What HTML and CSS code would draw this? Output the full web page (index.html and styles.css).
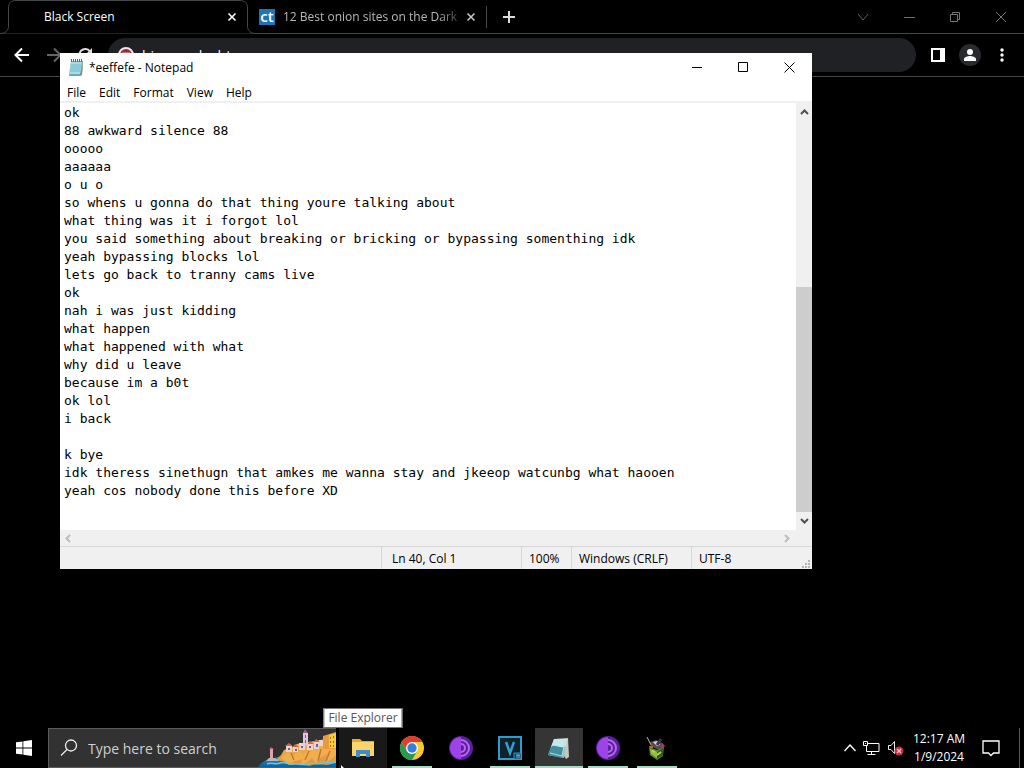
FILE: index.html
```html
<!DOCTYPE html>
<html lang="en">
<head>
    <meta charset="UTF-8">
    <meta name="viewport" content="width=device-width, initial-scale=1.0">
    <title>Black Screen</title>
    <link rel="stylesheet" href="styles.css">
</head>
<body>
    <div class="desktop">
        <!-- Browser -->
        <header class="browser">
            <div class="tab-strip">
                <div class="tab active">
                    <svg class="tab-outline" width="256" height="34" viewBox="0 0 256 34" fill="#000" stroke="#46474a"><path d="M0 33.500C5 33.500 8.500 31 8.500 26V8C8.500 3 11 .5 16 .5H239C245 .5 247.500 3 247.500 8V26C247.500 31 251 33.500 256 33.500"/></svg>
                    <span class="tab-title">Black Screen</span>
                    <button class="tab-close" aria-label="Close tab"><svg width="10" height="10" viewBox="0 0 10 10" stroke="#fff" stroke-width="1.600"><path d="M1.500 1.500l7 7M8.500 1.500l-7 7"/></svg></button>
                </div>
                <div class="tab">
                    <span class="favicon">ct</span>
                    <span class="tab-title faded">12 Best onion sites on the Dark</span>
                    <button class="tab-close" aria-label="Close tab"><svg width="10" height="10" viewBox="0 0 10 10" stroke="#c4c4c4" stroke-width="1.600"><path d="M1.500 1.500l7 7M8.500 1.500l-7 7"/></svg></button>
                </div>
                <button class="new-tab" aria-label="New tab"><svg width="12" height="12" viewBox="0 0 12 12" stroke="#ddd" stroke-width="2"><path d="M6 0v12M0 6h12"/></svg></button>
                <div class="browser-controls">
                    <button aria-label="Search tabs"><svg width="12" height="12" viewBox="0 0 12 12" fill="none" stroke="#606060"><path d="M1 3l5 6 5-6"/></svg></button>
                    <button aria-label="Minimize"><svg width="12" height="12" viewBox="0 0 12 12" stroke="#6d6d6d"><path d="M1 6.500h11"/></svg></button>
                    <button aria-label="Restore"><svg width="12" height="12" viewBox="0 0 12 12" fill="none" stroke="#777"><path d="M1.500 3.500h7v7h-7zM3.500 3V1.500h7v7H9"/></svg></button>
                    <button aria-label="Close"><svg width="12" height="12" viewBox="0 0 12 12" stroke="#777"><path d="M1 1l10 10M11 1L1 11"/></svg></button>
                </div>
            </div>
            <div class="toolbar">
                <button class="nav-btn" aria-label="Back"><svg width="16" height="16" viewBox="0 0 16 16" fill="none" stroke="#fff" stroke-width="2"><path d="M15 8H2M8 1.500L1.500 8 8 14.500"/></svg></button>
                <button class="nav-btn" aria-label="Forward"><svg width="16" height="16" viewBox="0 0 16 16" fill="none" stroke="#666" stroke-width="2"><path d="M1 8h13M8 1.500L14.500 8 8 14.500"/></svg></button>
                <button class="nav-btn" aria-label="Reload"><svg width="16" height="16" viewBox="0 0 16 16" fill="none" stroke="#ddd" stroke-width="2"><path d="M12.500 11A6 6 0 1 1 12 4.300"/><path d="M14 1v6H8z" fill="#ddd" stroke="none"/></svg></button>
                <div class="omnibox">
                    <svg width="16" height="16" viewBox="0 0 16 16"><circle cx="8" cy="8" r="7" fill="#7c3540" stroke="#f4e3e5" stroke-width="2"/><path d="M4 7h8" stroke="#dc6873" stroke-width="4"/></svg>
                    <input type="text" aria-label="Address" value="bigyear.dusht">
                </div>
                <button class="tool-btn" aria-label="Side panel"><svg width="14" height="14" viewBox="0 0 14 14"><path fill="#fff" fill-rule="evenodd" d="M0 0h14v14H0zM2 2v10h7V2z"/></svg></button>
                <button class="tool-btn" aria-label="Profile"><svg width="22" height="22" viewBox="0 0 22 22"><circle cx="11" cy="11" r="11" fill="#292a2d"/><circle cx="11" cy="8" r="3" fill="#fff"/><path d="M5 17v-2c0-2 4-3 6-3s6 1 6 3v2z" fill="#fff"/></svg></button>
                <button class="tool-btn" aria-label="Menu"><svg width="4" height="14" viewBox="0 0 4 14" fill="#fff"><circle cx="2" cy="2" r="1.700"/><circle cx="2" cy="7" r="1.700"/><circle cx="2" cy="12" r="1.700"/></svg></button>
            </div>
        </header>
        <main class="page"></main>

        <!-- Notepad window -->
        <section class="notepad">
            <div class="titlebar">
                <svg width="17" height="18" viewBox="0 0 17 18"><path d="M3 2h12l-1 14-3 1H1z" fill="#67adb9"/><path d="M3 3h11l-2 12H1z" fill="#a5dce5"/><path d="M3 6h10M3 8h10M2 10h10M2 12h10" stroke="#70bac8"/><path d="M15 3l-1 13-3 1 2-3z" fill="#9a8459"/><path d="M3.500 0v3M5.500 0v3M7.500 0v3M9.500 0v3M11.500 0v3M13.500 0v3" stroke="#526970"/></svg>
                <h1>*eeffefe - Notepad</h1>
                <div class="window-controls">
                    <button aria-label="Minimize"><svg width="11" height="11" viewBox="0 0 11 11" stroke="#000"><path d="M0 5.500h10"/></svg></button>
                    <button aria-label="Maximize"><svg width="11" height="11" viewBox="0 0 11 11" fill="none" stroke="#000"><path d="M.5.5h9v9h-9z"/></svg></button>
                    <button aria-label="Close"><svg width="11" height="11" viewBox="0 0 11 11" stroke="#000"><path d="M.5.5l10 10M10.500.5l-10 10"/></svg></button>
                </div>
            </div>
            <nav class="menubar">
                <button>File</button>
                <button>Edit</button>
                <button>Format</button>
                <button>View</button>
                <button>Help</button>
            </nav>
            <div class="editor">
                <textarea aria-label="Text editor" wrap="off" spellcheck="false">ok
88 awkward silence 88
ooooo
aaaaaa
o u o
so whens u gonna do that thing youre talking about
what thing was it i forgot lol
you said something about breaking or bricking or bypassing somenthing idk
yeah bypassing blocks lol
lets go back to tranny cams live
ok
nah i was just kidding
what happen
what happened with what
why did u leave
because im a b0t
ok lol
i back

k bye
idk theress sinethugn that amkes me wanna stay and jkeeop watcunbg what haooen
yeah cos nobody done this before XD</textarea>
                <div class="scroll-y">
                    <button aria-label="Scroll up"><svg width="9" height="6" viewBox="0 0 9 6" fill="none" stroke="#505050" stroke-width="2"><path d="M1 5l3.500-3.500L8 5"/></svg></button>
                    <div class="thumb"></div>
                    <button aria-label="Scroll down"><svg width="9" height="6" viewBox="0 0 9 6" fill="none" stroke="#505050" stroke-width="2"><path d="M1 1l3.500 3.500L8 1"/></svg></button>
                </div>
            </div>
            <div class="scroll-x">
                <button aria-label="Scroll left"><svg width="6" height="9" viewBox="0 0 6 9" fill="none" stroke="#bcbcbc" stroke-width="2"><path d="M5 1L1.500 4.500 5 8"/></svg></button>
                <button aria-label="Scroll right"><svg width="6" height="9" viewBox="0 0 6 9" fill="none" stroke="#bcbcbc" stroke-width="2"><path d="M1 1l3.500 3.500L1 8"/></svg></button>
            </div>
            <footer class="statusbar">
                <span class="position">Ln 40, Col 1</span>
                <span class="zoom">100%</span>
                <span class="line-ending">Windows (CRLF)</span>
                <span class="encoding">UTF-8</span>
                <svg width="9" height="9" viewBox="0 0 9 9" fill="#b4b4b4"><path d="M6 0h2v2H6zM3 3h2v2H3zM6 3h2v2H6zM0 6h2v2H0zM3 6h2v2H3zM6 6h2v2H6z"/></svg>
            </footer>
        </section>

        <!-- Taskbar -->
        <footer class="taskbar">
            <button class="start" aria-label="Start"><svg width="16" height="16" viewBox="0 0 16 16" fill="#fff"><path d="M0 2.300L6.500 1.400v6.100H0zM7.300 1.300L16 0v7.500H7.300zM0 8.400h6.500v6.200L0 13.700zM7.300 8.400H16V16l-8.700-1.300z"/></svg></button>
            <label class="search">
                <svg width="18" height="18" viewBox="0 0 18 18" fill="none" stroke="#eee" stroke-width="1.300"><circle cx="11" cy="6.500" r="5.500"/><path d="M7 10.500L1 16.500"/></svg>
                <input type="text" placeholder="Type here to search" aria-label="Type here to search">
                <svg class="scenery" width="79" height="38" viewBox="0 0 79 38">
                    <defs>
                        <linearGradient id="rock" x1="0" y1="0" x2="0" y2="1"><stop offset="0" stop-color="#f3bd62"/><stop offset="1" stop-color="#dd9238"/></linearGradient>
                        <linearGradient id="sea" x1="0" y1="0" x2="0" y2="1"><stop offset="0" stop-color="#2f9cc4"/><stop offset="1" stop-color="#0c609a"/></linearGradient>
                    </defs>
                    <path d="M1 38c3-4 7-7 13-8l14-4 51 6v6z" fill="url(#sea)"/>
                    <path d="M19 31l5-5 3-5 8-3 5-3 12-2 12-2 15-4v26l-8 3-12-1-7 2-10-2-7 1-6-3z" fill="url(#rock)"/>
                    <path d="M24 29l7-6 5 4 7-5 3 4 8-8 6 4 6-8 13 3v9l-10 8 2-10-7 4-5 7-4-6-6 5-6 2 3-6-8 2-6 4z" fill="#f1ae4c"/>
                    <path d="M34 24l3 7M52 22l-4 9M64 20l-3 12M73 22l-4 10" stroke="#c67830" fill="none" stroke-width="1.500"/>
                    <path d="M29 17h6v6h-6zM36 18h5v5h-5zM42 14h6v7h-6zM50 15h6v6h-6zM57 13h5v7h-5zM62 11h4v6h-4z" fill="#efd3c9"/>
                    <path d="M28 17l4-3 4 3zM36 18l2-3 4 3zM50 15l3-3 4 3zM57 13l2-3 4 3z" fill="#c9645a"/>
                    <path d="M46 4h5v12h-5z" fill="#dfc6df"/>
                    <path d="M46 4l2-4 3 4z" fill="#9d5b94"/>
                    <path d="M48 6h1v3h-1zM48 11h1v3h-1zM31 19h2v2h-2zM38 20h2v2h-2zM44 17h2v2h-2zM52 17h2v2h-2zM59 15h2v3h-2z" fill="#745c98"/>
                    <path d="M66 7l13-4v17H66z" fill="#e79b3d"/><path d="M72 6l7-2v15h-7z" fill="#f7cd3c"/>
                    <path d="M73 8h1v2h-1zM76 7h1v2h-1zM73 12h1v2h-1zM76 12h1v2h-1zM73 16h1v2h-1zM76 16h1v2h-1z" fill="#9b6725"/>
                    <path d="M13 20h3v10h-3z" fill="#dea5a9"/><path d="M12 20l2-2 3 2z" fill="#b95566"/><path d="M9 32l3-3h6l4 3z" fill="#b9b7bc"/>
                    <path d="M10 35c5-2 8 1 13-1s8 2 13 1 9 2 14 0 10 1 15-1 9 1 14-1" fill="none" stroke="#71c5d9" stroke-width="1.500"/>
                </svg>
            </label>
            <div class="apps">
                <button class="app hovered" aria-label="File Explorer">
                    <svg width="22" height="20" viewBox="0 0 22 20"><path d="M0 1h8l2 2h12v15H0z" fill="#e3a735"/><path d="M0 4h22v14H0z" fill="#fbd56c"/><path d="M4 19v-7h14v7h-4v-3H8v3z" fill="#3c8dcc"/></svg>
                    <span class="tooltip" role="tooltip">File Explorer</span>
                </button>
                <button class="app running" aria-label="Google Chrome">
                    <svg width="24" height="24" viewBox="0 0 24 24"><circle cx="12" cy="12" r="12" fill="#f9c82d"/><path d="M12 6h10.400A12 12 0 0 0 1.600 6l5.200 9z" fill="#df3d32"/><path d="M1.600 6A12 12 0 0 0 12 24l5.200-9L12 18l-5.200-3z" fill="#279b52"/><circle cx="12" cy="12" r="6" fill="#fff"/><circle cx="12" cy="12" r="4.700" fill="#367fdd"/></svg>
                </button>
                <button class="app" aria-label="Tor Browser">
                    <svg width="24" height="24" viewBox="0 0 24 24"><circle cx="12" cy="12" r="12" fill="#5a209c"/><path d="M12 1a11 11 0 0 0 0 22z" fill="#9d43e8"/><path d="M12 4a8 8 0 0 1 0 16M12 8a4 4 0 0 1 0 8" fill="none" stroke="#b767ed" stroke-width="2"/></svg>
                </button>
                <button class="app running" aria-label="VEGAS Pro">
                    <svg width="24" height="24" viewBox="0 0 24 24"><path d="M1 1h22v22H1z" fill="#10202d" stroke="#2d9dce" stroke-width="2"/><path d="M8 6l4 11 4-11" fill="none" stroke="#329fd0" stroke-width="2.500"/><path d="M16 17h7v6h-7z" fill="#19394c" stroke="#2d9dce"/><path d="M18 19h4M19 19v3M21 19v3" stroke="#65c1e4"/></svg>
                </button>
                <button class="app running current" aria-label="Notepad">
                    <svg width="24" height="24" viewBox="0 0 24 24"><path d="M7 3l14-1 1 19-3 2z" fill="#c8c9bd"/><path d="M7 3h13l-3 19-16-3z" fill="#8fc7cf"/><path d="M5 8l12 2-2 12-14-3z" fill="#438fa2"/><path d="M7 3h13l-1 7C13 14 8 7 4 11z" fill="#c7e8e8"/><path d="M3 17l12 3M18 5l-3 15" stroke="#b9dce0" fill="none"/></svg>
                </button>
                <button class="app running" aria-label="Tor Browser">
                    <svg width="24" height="24" viewBox="0 0 24 24"><circle cx="12" cy="12" r="12" fill="#5a209c"/><path d="M12 1a11 11 0 0 0 0 22z" fill="#9d43e8"/><path d="M12 4a8 8 0 0 1 0 16M12 8a4 4 0 0 1 0 8" fill="none" stroke="#b767ed" stroke-width="2"/></svg>
                </button>
                <button class="app running" aria-label="Game">
                    <svg width="24" height="24" viewBox="0 0 24 24"><path d="M4 11l8 3 7-4-1 10-6 4-7-5z" fill="#568c28"/><path d="M5 13l7 3v6l-6-4z" fill="#93bd3d"/><path d="M12 16l6-4v7l-6 4z" fill="#2c5a21"/><path d="M5 6l6-2 6 3 3 3-7 4-7-4z" fill="#5c4a52"/><path d="M8 6l4 4 3-1-2-4z" fill="#e1d7d8"/><path d="M2 1l4 8" stroke="#d1b596"/><path d="M12 9l4-6" stroke="#383450" stroke-width="3"/><path d="M17 7l3 3-4 2z" fill="#bd3445"/><path d="M7 15l3 1M12 19l4-3" stroke="#b9d34f" stroke-width="2"/><path d="M4 10h4v2H5z" fill="#c65e38"/></svg>
                </button>
            </div>
            <div class="tray">
                <button aria-label="Show hidden icons"><svg width="12" height="8" viewBox="0 0 12 8" fill="none" stroke="#fff" stroke-width="1.300"><path d="M.5 7L6 1l5.500 6"/></svg></button>
                <button aria-label="Network"><svg width="17" height="14" viewBox="0 0 17 14" fill="none" stroke="#fff"><path d="M5 2.500h11v8H3.500V5M4.500 13.500h8M8.500 11v2M.5.500h4v4h-4zM2.500 2v1"/></svg></button>
                <button aria-label="Volume muted"><svg width="17" height="16" viewBox="0 0 17 16"><path d="M1.500 5.500H4L7.500 1.500v12L4 9.500H1.500z" fill="none" stroke="#eee"/><circle cx="12" cy="11" r="4.500" fill="#c82c43"/><path d="M10 9l4 4M14 9l-4 4" stroke="#f6cbd0" stroke-width="1.300"/></svg></button>
                <button class="clock"><span>12:17 AM</span><span>1/9/2024</span></button>
                <button class="notifications" aria-label="Notifications"><svg width="18" height="17" viewBox="0 0 18 17" fill="none" stroke="#fff" stroke-width="1.300"><path d="M1 1h16v12h-5.500L9 15.500 6.500 13H1z"/></svg></button>
                <button class="show-desktop" aria-label="Show desktop"></button>
            </div>
        </footer>
        <svg class="cursor" width="12" height="19" viewBox="0 0 12 19"><path d="M0 0v17l4-4 3 6 2-1-3-6h6z" fill="#fff"/></svg>
    </div>
</body>
</html>
```
FILE: styles.css
```css
* {
    margin: 0;
    padding: 0;
    box-sizing: border-box;
}

body {
    font-family: "Open Sans", "Noto Sans", sans-serif;
    font-size: 12px;
    background-color: #000;
    color: #fff;
}

button {
    display: flex;
    align-items: center;
    justify-content: center;
    border: none;
    background: none;
    color: inherit;
    font: inherit;
}

input,
textarea {
    border: none;
    outline: none;
    background: none;
    color: inherit;
    font: inherit;
}

svg {
    display: block;
    flex-shrink: 0;
}

.desktop {
    position: relative;
    display: flex;
    flex-direction: column;
    height: 100vh;
    overflow: hidden;
}

.page {
    flex: 1;
}

/* Browser */
.tab-strip {
    display: flex;
    align-items: center;
    height: 34px;
    border-bottom: 1px solid #46474a;
}

.tab {
    position: relative;
    display: flex;
    align-items: center;
    width: 239px;
    height: 22px;
    padding: 0 10px 0 11px;
    border-right: 1px solid #46474a;
    color: #b8b8b8;
}

.tab.active {
    width: 248px;
    height: 34px;
    padding: 0 11px 0 44px;
    border: none;
    color: #fff;
}

.tab-outline {
    position: absolute;
    top: 0;
    left: 0;
}

.tab-title {
    position: relative;
    flex: 1;
    white-space: nowrap;
}

.faded {
    mask-image: linear-gradient(to right, #000 85%, transparent);
}

.tab-close {
    position: relative;
}

.favicon {
    width: 16px;
    height: 16px;
    margin-right: 8px;
    background-color: #1d75b5;
    color: #fff;
    font-size: 15px;
    font-weight: 600;
    line-height: 14px;
    text-align: center;
}

.new-tab {
    width: 44px;
    height: 34px;
}

.browser-controls {
    display: flex;
    margin-left: auto;
}

.browser-controls button {
    width: 46px;
    height: 28px;
}

.toolbar {
    display: flex;
    align-items: center;
    height: 43px;
    padding: 0 6px;
    border-bottom: 1px solid #46474a;
}

.nav-btn {
    width: 32px;
    height: 34px;
}

.omnibox {
    display: flex;
    flex: 1;
    align-items: center;
    gap: 8px;
    height: 34px;
    margin: 0 6px;
    padding: 0 10px;
    border-radius: 17px;
    background-color: #202124;
}

.omnibox input {
    flex: 1;
    font-size: 14px;
}

.tool-btn {
    width: 32px;
    height: 32px;
}

/* Notepad */
.notepad {
    position: absolute;
    top: 53px;
    left: 60px;
    display: flex;
    flex-direction: column;
    width: 752px;
    height: 516px;
    background-color: #fff;
    color: #000;
}

.titlebar {
    display: flex;
    align-items: center;
    gap: 4px;
    height: 29px;
    padding-left: 8px;
}

.titlebar h1 {
    font-size: 12px;
    font-weight: 400;
}

.window-controls {
    display: flex;
    margin-left: auto;
}

.window-controls button {
    width: 46px;
    height: 29px;
}

.menubar {
    display: flex;
    gap: 13px;
    height: 21px;
    padding: 2px 7px 0;
    border-bottom: 2px solid #f0f0f0;
}

.editor {
    display: flex;
    flex: 1;
}

.editor textarea {
    flex: 1;
    padding: 1px 4px 0;
    font-family: "DejaVu Sans Mono", monospace;
    font-size: 13px;
    line-height: 18px;
    resize: none;
    overflow: hidden;
}

.scroll-y {
    display: flex;
    flex-direction: column;
    width: 16px;
    background-color: #f0f0f0;
}

.scroll-y button {
    height: 18px;
}

.scroll-y .thumb {
    height: 225px;
    margin-top: auto;
    background-color: #cdcdcd;
}

.scroll-x {
    display: flex;
    justify-content: space-between;
    height: 16px;
    padding-right: 17px;
    background-color: #f0f0f0;
}

.scroll-x button {
    width: 16px;
}

.statusbar {
    display: flex;
    align-items: center;
    justify-content: flex-end;
    height: 23px;
    border-top: 1px solid #d7d7d7;
    background-color: #f0f0f0;
}

.statusbar span {
    height: 22px;
    padding-left: 7px;
    border-left: 1px solid #d7d7d7;
    line-height: 23px;
}

.statusbar .position {
    width: 140px;
    padding-left: 10px;
}

.zoom {
    width: 50px;
}

.line-ending {
    width: 120px;
}

.encoding {
    width: 111px;
}

.statusbar svg {
    align-self: flex-end;
    margin-right: 1px;
}

/* Taskbar */
.taskbar {
    display: flex;
    height: 40px;
    background-color: #000;
}

.start {
    width: 48px;
}

.search {
    display: flex;
    align-items: center;
    width: 288px;
    padding-left: 11px;
    border: 1px solid #5d5d5d;
    border-right: none;
    background-color: #323232;
}

.search input {
    flex: 1;
    min-width: 0;
    padding-left: 10px;
    font-size: 14px;
}

.search input::placeholder {
    color: #cfcfcf;
}

.apps {
    display: flex;
    gap: 1px;
    margin-left: 3px;
}

.app {
    position: relative;
    width: 48px;
}

.app.hovered {
    background-color: #191919;
}

.app.current {
    background-color: #353535;
}

.app.running::after {
    content: "";
    position: absolute;
    right: 4px;
    bottom: 0;
    left: 4px;
    height: 2px;
    background-color: #a0dcc3;
}

.app.current::after {
    right: 0;
    left: 0;
}

.tooltip {
    position: absolute;
    bottom: 40px;
    left: 50%;
    padding: 1px 4px;
    border: 1px solid #767676;
    background-color: #fff;
    color: #575757;
    line-height: 16px;
    white-space: nowrap;
    transform: translateX(-50%);
}

.tray {
    display: flex;
    gap: 7px;
    margin-left: auto;
}

.clock {
    flex-direction: column;
    width: 56px;
    line-height: 18px;
}

.notifications {
    width: 34px;
    margin-right: 4px;
}

.show-desktop {
    width: 5px;
    border-left: 1px solid #555;
}

.cursor {
    position: absolute;
    top: 765px;
    left: 341px;
}
```
